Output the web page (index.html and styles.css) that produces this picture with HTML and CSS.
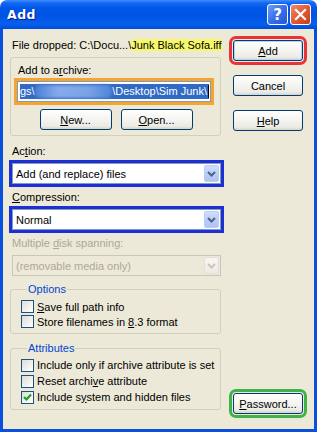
FILE: index.html
```html
<!DOCTYPE html>
<html>
<head>
<meta charset="utf-8">
<link rel="stylesheet" href="styles.css">
</head>
<body>
<div class="window">
  <div class="titlebar">
    <span class="title">Add</span>
    <div class="caption-btns">
      <span class="cbtn help">?</span>
      <span class="cbtn close">
        <svg width="13" height="13" viewBox="0 0 13 13"><path d="M2 2 L11 11 M11 2 L2 11" stroke="#fff" stroke-width="2.2" stroke-linecap="square"/></svg>
      </span>
    </div>
  </div>
  <div class="frame">
    <div class="left">
      <div class="line pad">File dropped: C:\Docu...\<span class="hl">Junk Black Sofa.iff</span></div>
      <div class="group archive">
        <div class="line">Add to a<u>r</u>chive:</div>
        <div class="input mark-orange">
          <div class="sel"><span>gs\</span><span class="blur"></span><span>\Desktop\Sim Junk\</span><span class="caret"></span></div>
        </div>
        <div class="btnrow">
          <span class="btn small"><u>N</u>ew...</span>
          <span class="btn small"><u>O</u>pen...</span>
        </div>
      </div>
      <div class="line pad lbl1">Ac<u>t</u>ion:</div>
      <div class="combo mark-blue"><span class="val">Add (and replace) files</span><span class="arrow"><svg width="9" height="6" viewBox="0 0 9 6"><path d="M1 1 L4.5 4.5 L8 1" fill="none" stroke="#4D6185" stroke-width="2"/></svg></span></div>
      <div class="line pad lbl"><u>C</u>ompression:</div>
      <div class="combo mark-blue"><span class="val">Normal</span><span class="arrow"><svg width="9" height="6" viewBox="0 0 9 6"><path d="M1 1 L4.5 4.5 L8 1" fill="none" stroke="#4D6185" stroke-width="2"/></svg></span></div>
      <div class="line pad lbl disabled">Multiple <u>d</u>isk spanning:</div>
      <div class="combo off"><span class="val">(removable media only)</span><span class="arrow"><svg width="9" height="6" viewBox="0 0 9 6"><path d="M1 1 L4.5 4.5 L8 1" fill="none" stroke="#C9C7BA" stroke-width="2"/></svg></span></div>
      <fieldset class="fs opts">
        <legend>Options</legend>
        <div class="chk"><span class="box"></span><span><u>S</u>ave full path info</span></div>
        <div class="chk"><span class="box"></span><span>Store filenames in <u>8</u>.3 format</span></div>
      </fieldset>
      <fieldset class="fs attrs">
        <legend>Attributes</legend>
        <div class="chk"><span class="box"></span><span>Include only if archive attribute is set</span></div>
        <div class="chk"><span class="box"></span><span>Reset archi<u>v</u>e attribute</span></div>
        <div class="chk"><span class="box on"><svg width="11" height="11" viewBox="0 0 11 11"><path d="M2 5 L4.5 7.5 L9 2.5" fill="none" stroke="#21A121" stroke-width="2.2"/></svg></span><span>Include s<u>y</u>stem and hidden files</span></div>
      </fieldset>
    </div>
    <div class="right">
      <span class="btn mark-red default"><u>A</u>dd</span>
      <span class="btn">Cancel</span>
      <span class="btn"><u>H</u>elp</span>
      <span class="btn mark-green pwd"><u>P</u>assword...</span>
    </div>
  </div>
</div>
</body>
</html>
```
FILE: styles.css
```css
html, body { margin: 0; padding: 0; }
body {
  font-family: "Liberation Sans", Arial, sans-serif;
  font-size: 11px;
  color: #000;
  background: #fff;
}
.window {
  width: 317px;
  height: 432px;
  display: flex;
  flex-direction: column;
}
.titlebar {
  height: 29px;
  flex: none;
  display: flex;
  align-items: center;
  justify-content: space-between;
  padding: 0 6px 0 7px;
  background: linear-gradient(to bottom, #3C8FFF 0px, #1467F2 3px, #0058E8 8px, #0054E3 16px, #0760ED 24px, #0049D8 29px);
  border-radius: 7px 7px 0 0;
  box-sizing: border-box;
}
.title {
  color: #fff;
  font-family: "DejaVu Sans", sans-serif;
  font-weight: bold;
  font-size: 12.5px;
  text-shadow: 1px 1px 0 #0A1883;
  letter-spacing: 0.5px;
}
.caption-btns { display: flex; gap: 2px; }
.cbtn {
  width: 21px;
  height: 21px;
  box-sizing: border-box;
  border: 1px solid #fff;
  border-radius: 3px;
  display: flex;
  align-items: center;
  justify-content: center;
  color: #fff;
}
.help {
  background: linear-gradient(135deg, #6E9CF9 0%, #3A6FEA 50%, #2456D8 100%);
  font-family: "DejaVu Sans", sans-serif;
  font-weight: bold;
  font-size: 15px;
}
.close {
  background: linear-gradient(135deg, #F08C6C 0%, #E15B36 50%, #C83A14 100%);
}
.frame {
  flex: 1;
  display: flex;
  background: #ECE9D8;
  border: 3px solid #0A50DC;
  border-top: 0;
  padding: 9px 11px 15px 7px;
}
.left {
  width: 211px;
  flex: none;
  display: flex;
  flex-direction: column;
}
.right {
  width: 70px;
  margin-left: 12px;
  display: flex;
  flex-direction: column;
  gap: 14px;
  padding-top: 2px;
}
.line { line-height: 14px; height: 14px; white-space: nowrap; }
.pad { padding-left: 2px; }
.hl { background: #F7F76A; }
.group {
  border: 1px solid #D0D0BF;
  border-radius: 3px;
}
.archive {
  margin-top: 5px;
  padding: 5px 9px 5px 6px;
}
.archive .line { padding-left: 1px; }
.input {
  margin-top: 4px;
  height: 21px;
  box-sizing: border-box;
  border: 1px solid #7F9DB9;
  background: #fff;
  padding: 2px 1px 2px 2px;
}
.sel {
  height: 15px;
  background: #316AC5;
  color: #fff;
  display: flex;
  align-items: center;
  line-height: 15px;
  white-space: nowrap;
}
.sel .blur {
  flex: 1;
  height: 13px;
  background: linear-gradient(to right, #4A80D6, #86ABEA 30%, #7AA2E6 70%, #4E84D8);
  border-radius: 5px;
  filter: blur(1.5px);
}
.caret { width: 1px; height: 13px; background: #000; margin-left: 1px; }
.btnrow {
  display: flex;
  justify-content: center;
  gap: 9px;
  margin-top: 7px;
  padding-left: 4px;
}
.btn {
  height: 21px;
  box-sizing: border-box;
  border: 1px solid #003C74;
  border-radius: 3px;
  background: linear-gradient(to bottom, #FFFFFF 0%, #F5F5F2 45%, #ECEBE5 85%, #D8D2C6 100%);
  display: flex;
  align-items: center;
  justify-content: center;
  line-height: 14px;
}
.btn.small { width: 72px; }
.btn.default { box-shadow: inset 0 0 0 1px #BCD2F5; }
.pwd { margin-top: auto; }
.lbl1 { margin-top: 8px; }
.lbl { margin-top: 6px; }
.disabled { color: #ACA899; }
.combo {
  margin-top: 5px;
  margin-left: 2px;
  height: 21px;
  box-sizing: border-box;
  border: 1px solid #7F9DB9;
  background: #fff;
  display: flex;
  align-items: center;
  padding: 1px 1px 1px 3px;
}
.combo .val { flex: 1; white-space: nowrap; }
.combo .arrow {
  width: 15px;
  height: 17px;
  box-sizing: border-box;
  border: 1px solid #B9CDF7;
  border-radius: 2px;
  background: linear-gradient(to bottom, #D0DEFC, #B8CCF7 60%, #AFC4F3);
  display: flex;
  align-items: center;
  justify-content: center;
}
.combo.off {
  border-color: #C9C7BA;
  background: #ECE9D8;
  color: #ACA899;
}
.combo.off .arrow {
  border-color: #E2E0D6;
  background: linear-gradient(to bottom, #F7F6F2, #EDEBE3);
}
.fs {
  margin: 6px 0 0 0;
  border: 1px solid #D0D0BF;
  border-radius: 3px;
  min-width: 0;
}
.fs legend {
  color: #0046D5;
  padding: 0 1px;
  margin-left: 6px;
  line-height: 14px;
}
.opts { padding: 3px 8px 4px 10px; }
.attrs { margin-top: 7px; padding: 2px 8px 4px 10px; }
.chk {
  display: flex;
  align-items: center;
  height: 15px;
  gap: 3px;
  white-space: nowrap;
  line-height: 14px;
}
.attrs .chk { height: 16px; }
.box {
  width: 13px;
  height: 13px;
  box-sizing: border-box;
  border: 1px solid #1C5180;
  background: linear-gradient(135deg, #DCDCD7 0%, #F2F2EF 60%, #FFFFFF 100%);
  display: flex;
  align-items: center;
  justify-content: center;
  flex: none;
}
.mark-red { outline: 3px solid #E8333A; outline-offset: 1px; }
.mark-orange { outline: 3px solid #F5A331; outline-offset: 0; }
.mark-blue { outline: 3px solid #1F2FD6; outline-offset: 0; }
.mark-green { outline: 3px solid #3FB34A; outline-offset: 1px; }
```
